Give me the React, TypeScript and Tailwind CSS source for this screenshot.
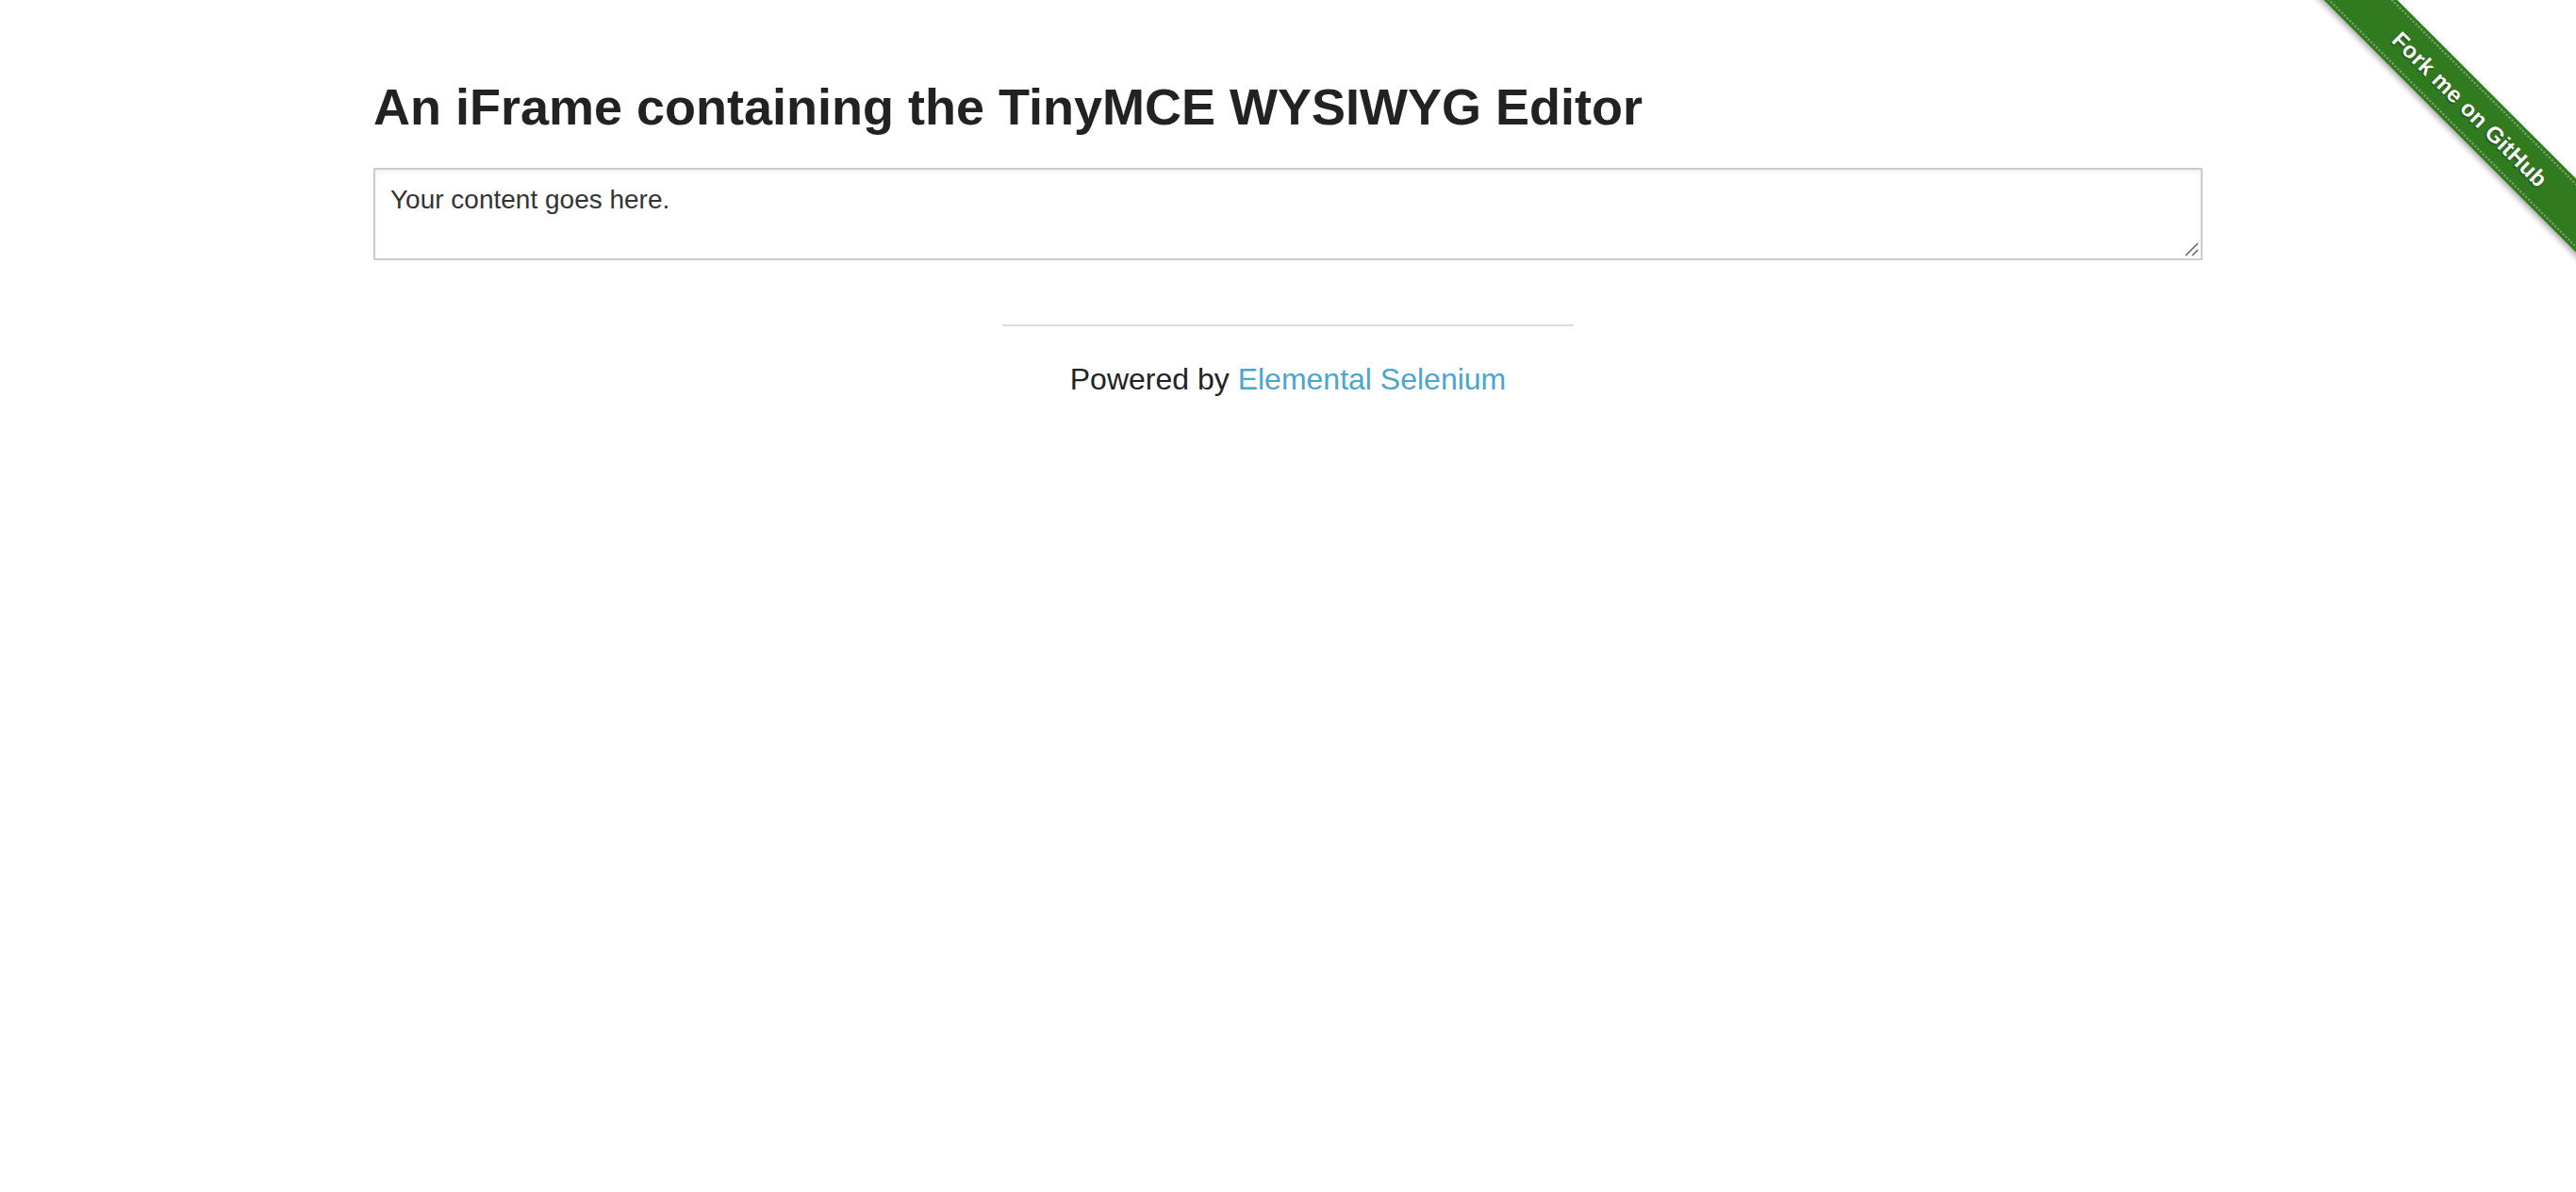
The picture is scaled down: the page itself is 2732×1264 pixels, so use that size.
import React from "react";

function ForkRibbon() {
  return (
    <a
      href="#"
      className="absolute top-0 right-0 block w-[298px] h-[298px] overflow-hidden"
      aria-label="Fork me on GitHub"
    >
      <div className="absolute left-[-66px] top-[87px] w-[500px] h-[55px] rotate-45 bg-[#317a1f] shadow-[0_3px_6px_rgba(0,0,0,0.35)] flex items-center justify-center">
        <div className="absolute left-0 right-0 top-[3px] border-t-2 border-dotted border-[#7fae6f]" />
        <div className="absolute left-0 right-0 bottom-[3px] border-t-2 border-dotted border-[#7fae6f]" />
        <span className="pl-[4px] text-white text-[24px] font-bold tracking-[0.3px] font-['Liberation_Sans',Arial,sans-serif] [text-shadow:0_1px_2px_rgba(0,0,0,0.6)] leading-none">
          Fork me on GitHub
        </span>
      </div>
    </a>
  );
}

export default function App() {
  return (
    <div className="relative min-h-screen bg-white font-['Liberation_Sans',Arial,sans-serif] text-[#222]">
      <div className="mx-auto max-w-[2000px] px-[30px] pt-[76px]">
        <h3 className="text-[54px] font-bold leading-[1.4] text-[#222] mb-[26px]">
          An iFrame containing the TinyMCE WYSIWYG Editor
        </h3>
        <div className="relative h-[98px] border-2 border-[#cccccc] bg-white shadow-[inset_0_3px_4px_rgba(0,0,0,0.06)]">
          <p className="m-[16px] mt-[14px] text-[28px] text-[#333] leading-[1.3]">
            Your content goes here.
          </p>
          <svg
            className="absolute right-[2px] bottom-[2px]"
            width="16"
            height="16"
            viewBox="0 0 16 16"
          >
            <line x1="2" y1="15" x2="15" y2="2" stroke="#666" strokeWidth="1.6" />
            <line x1="9" y1="15" x2="15" y2="9" stroke="#666" strokeWidth="1.6" />
          </svg>
        </div>
      </div>
      <div className="mx-auto max-w-[2000px] flex justify-center mt-[68px]">
        <div className="w-1/3 px-[30px]">
          <div className="border-t-2 border-[#dddddd]" />
          <div className="text-center text-[32px] leading-[1.5] text-[#222] mt-[32px]">
            Powered by{" "}
            <a href="#" className="text-[#4aa5cf]">
              Elemental Selenium
            </a>
          </div>
        </div>
      </div>
      <ForkRibbon />
    </div>
  );
}
